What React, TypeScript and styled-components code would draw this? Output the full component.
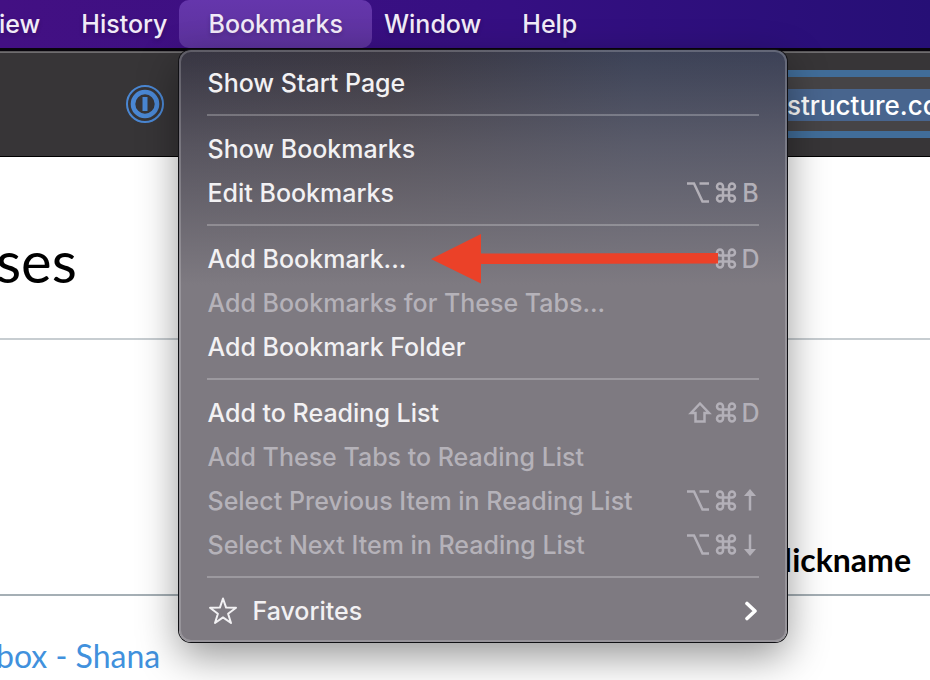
import React from "react";
import styled, { createGlobalStyle } from "styled-components";

const GlobalStyle = createGlobalStyle`
  *, *::before, *::after { box-sizing: border-box; }
  body {
    margin: 0;
    background: #fff;
    overflow: hidden;
    font-family: Inter, "Liberation Sans", sans-serif;
  }
  button { font: inherit; border: 0; background: none; padding: 0; }
  h1 { margin: 0; }
`;

const Screen = styled.div`
  min-height: 100vh;
  overflow: hidden;
`;

const MenuBar = styled.nav`
  display: flex;
  height: 48px;
  background: linear-gradient(to right, #431083 0%, #350f82 55%, #260f76 100%);
`;

const BarSlot = styled.div`
  position: relative;
  margin-right: -17px;
  &:first-child { margin-left: -30px; }
`;

const BarButton = styled.button<{ $open?: boolean }>`
  display: block;
  height: 48px;
  padding: 0 29px;
  border-radius: 10px;
  font-size: 25px;
  line-height: 48px;
  font-weight: 500;
  color: #f1ebf7;
  background: ${(p) => (p.$open ? "linear-gradient(#6536ac, #5c329c)" : "none")};
  text-shadow: 0 2px 4px rgba(0, 0, 0, 0.2);
`;

const Toolbar = styled.header`
  display: flex;
  align-items: center;
  height: 109px;
  padding-left: 126px;
  background: #373537;
  border-top: 3px solid #08050c;
  border-bottom: 1px solid #000;
  box-shadow: inset 0 1px #5a585a, inset 0 2px #6f6d6f;
`;

const VaultButton = styled.button`
  width: 38px;
  height: 38px;
  svg { display: block; }
`;

const AddressField = styled.div`
  flex: 1;
  min-width: 0;
  margin-left: 596px;
  padding: 12px 0 10px;
  background: #464446;
  border-top: 7px solid #416d99;
  border-bottom: 7px solid #416d99;
  overflow: hidden;
`;

const AddressText = styled.div`
  height: 32px;
  padding-left: 27px;
  background: #48658e;
  color: #fff;
  font-size: 26px;
  line-height: 34px;
  font-weight: 500;
  white-space: nowrap;
`;

const Content = styled.main`
  margin-left: -4px;
  font-family: Lato, sans-serif;
`;

const Title = styled.h1`
  height: 183px;
  padding-top: 70px;
  border-bottom: 2px solid #c7cdd1;
  font-size: 58px;
  line-height: 68px;
  font-weight: 400;
  color: #000;
`;

const CourseTable = styled.table`
  width: 100%;
  border-collapse: collapse;
  th {
    height: 255px;
    padding: 0 19px 14px 0;
    border-bottom: 2px solid #a5afb5;
    text-align: right;
    vertical-align: bottom;
    font-size: 32px;
    line-height: 40px;
    font-weight: 700;
    color: #000;
  }
  td {
    padding: 40px 0 0;
    font-size: 32px;
    line-height: 40px;
  }
`;

const CourseLink = styled.a`
  color: #4191dd;
  text-decoration: none;
`;

const Menu = styled.div`
  position: absolute;
  z-index: 2;
  top: 50px;
  left: 0;
  width: 608px;
  padding: 9px 26px 7px;
  border: 2px solid rgba(255, 255, 255, 0.2);
  border-radius: 12px;
  background:
    linear-gradient(rgba(126, 122, 129, 0) 0, rgba(126, 122, 129, 0.45) 95px, #7e7a81 235px) border-box,
    linear-gradient(to right, #373542 0%, #3a3741 35%, #3c4257 75%, #3c4156 100%) border-box;
  box-shadow: 0 0 0 1px #101014, 0 14px 40px rgba(0, 0, 0, 0.42);
`;

const Separator = styled.hr`
  height: 2px;
  margin: 9px 0 11px;
  border: 0;
  background: rgba(255, 255, 255, 0.24);
`;

const MenuItem = styled.button`
  display: flex;
  align-items: center;
  width: 100%;
  height: 44px;
  font-size: 25px;
  line-height: 44px;
  font-weight: 500;
  color: #f2f1f3;
  white-space: nowrap;
  &:disabled { color: #b5b2b9; }
`;

const Label = styled.span`
  flex: 1;
  text-align: left;
`;

const Shortcut = styled.kbd`
  display: flex;
  align-items: center;
  font: inherit;
  color: #b3b0b8;
`;

const Key = styled.span`
  display: flex;
  justify-content: center;
  width: 28px;
  &:last-child { width: 18px; }
`;

const StarIcon = styled.svg`
  margin: 0 14px 0 1px;
`;

const Arrow = styled.svg`
  position: absolute;
  z-index: 3;
  top: 234px;
  left: 252px;
`;

const glyphs: Record<string, { title: string; width: number; d: string; solid?: string }> = {
  option: { title: "Option", width: 28, d: "M2 2.5H9L17.5 20.5H24M14.5 2.5H24" },
  command: {
    title: "Command",
    width: 28,
    d: "M10 8.5H7A3 3 0 1 1 10 5.5V17.5A3 3 0 1 1 7 14.5H19A3 3 0 1 1 16 17.5V5.5A3 3 0 1 1 19 8.5Z",
  },
  shift: { title: "Shift", width: 28, d: "M15 2.5 24 12H19.5V20.5H10.5V12H6Z" },
  up: { title: "Up", width: 18, d: "M9 6V21.5", solid: "M9 0 15 7H3Z" },
  down: { title: "Down", width: 18, d: "M9 1.5V17", solid: "M9 23 15 16H3Z" },
};

function KeyGlyph({ name }: { name: string }) {
  const glyph = glyphs[name];
  if (!glyph) return <>{name}</>;
  return (
    <svg width={glyph.width} height="24" viewBox={`0 0 ${glyph.width} 24`} fill="none" role="img" aria-label={glyph.title}>
      <path d={glyph.d} stroke="currentColor" strokeWidth="2.5" />
      {glyph.solid && <path d={glyph.solid} fill="currentColor" />}
    </svg>
  );
}

type Entry = { label: string; keys?: string[]; disabled?: boolean };

const groups: Entry[][] = [
  [{ label: "Show Start Page" }],
  [{ label: "Show Bookmarks" }, { label: "Edit Bookmarks", keys: ["option", "command", "B"] }],
  [
    { label: "Add Bookmark...", keys: ["command", "D"] },
    { label: "Add Bookmarks for These Tabs...", disabled: true },
    { label: "Add Bookmark Folder" },
  ],
  [
    { label: "Add to Reading List", keys: ["shift", "command", "D"] },
    { label: "Add These Tabs to Reading List", disabled: true },
    { label: "Select Previous Item in Reading List", keys: ["option", "command", "up"], disabled: true },
    { label: "Select Next Item in Reading List", keys: ["option", "command", "down"], disabled: true },
  ],
];

function BookmarksMenu() {
  return (
    <Menu role="menu" aria-label="Bookmarks">
      {groups.map((group, index) => (
        <React.Fragment key={index}>
          {group.map((entry) => (
            <MenuItem key={entry.label} role="menuitem" disabled={entry.disabled}>
              <Label>{entry.label}</Label>
              {entry.keys && (
                <Shortcut>
                  {entry.keys.map((key) => (
                    <Key key={key}><KeyGlyph name={key} /></Key>
                  ))}
                </Shortcut>
              )}
            </MenuItem>
          ))}
          <Separator />
        </React.Fragment>
      ))}
      <MenuItem role="menuitem">
        <StarIcon width="30" height="30" viewBox="0 0 30 30" fill="none" aria-hidden="true">
          <path
            d="M15 2.5 18.1 11.6 28 11.8 20.1 17.7 23 27 15 21.4 7 27 9.9 17.7 2 11.8 11.9 11.6Z"
            stroke="currentColor"
            strokeWidth="2"
            strokeLinejoin="round"
          />
        </StarIcon>
        <Label>Favorites</Label>
        <svg width="16" height="20" viewBox="0 0 16 20" fill="none" aria-hidden="true">
          <path d="M4 2.5 12 10 4 17.5" stroke="#fff" strokeWidth="3.6" strokeLinecap="round" strokeLinejoin="round" />
        </svg>
      </MenuItem>
    </Menu>
  );
}

export default function App() {
  return (
    <Screen>
      <GlobalStyle />
      <MenuBar>
        <BarSlot><BarButton>iew</BarButton></BarSlot>
        <BarSlot><BarButton>History</BarButton></BarSlot>
        <BarSlot>
          <BarButton $open aria-expanded="true">Bookmarks</BarButton>
          <BookmarksMenu />
          <Arrow width="288" height="50" viewBox="0 0 288 50" aria-hidden="true">
            <path d="M0 25 50 0V19.5L287 19V29.5L50 30V49.5Z" fill="#eb4128" />
          </Arrow>
        </BarSlot>
        <BarSlot><BarButton>Window</BarButton></BarSlot>
        <BarSlot><BarButton>Help</BarButton></BarSlot>
      </MenuBar>
      <Toolbar>
        <VaultButton aria-label="Password vault">
          <svg width="38" height="38" viewBox="0 0 38 38" fill="none" stroke="#4a87d3" aria-hidden="true">
            <circle cx="19" cy="19" r="18" strokeWidth="2" />
            <circle cx="19" cy="19" r="12" strokeWidth="4.6" />
            <path d="M19 12V26" strokeWidth="5" />
          </svg>
        </VaultButton>
        <AddressField>
          <AddressText>structure.co</AddressText>
        </AddressField>
      </Toolbar>
      <Content>
        <Title>ses</Title>
        <CourseTable>
          <thead>
            <tr>
              <th />
              <th>Nickname</th>
            </tr>
          </thead>
          <tbody>
            <tr>
              <td><CourseLink href="#course">box - Shana</CourseLink></td>
              <td />
            </tr>
          </tbody>
        </CourseTable>
      </Content>
    </Screen>
  );
}
